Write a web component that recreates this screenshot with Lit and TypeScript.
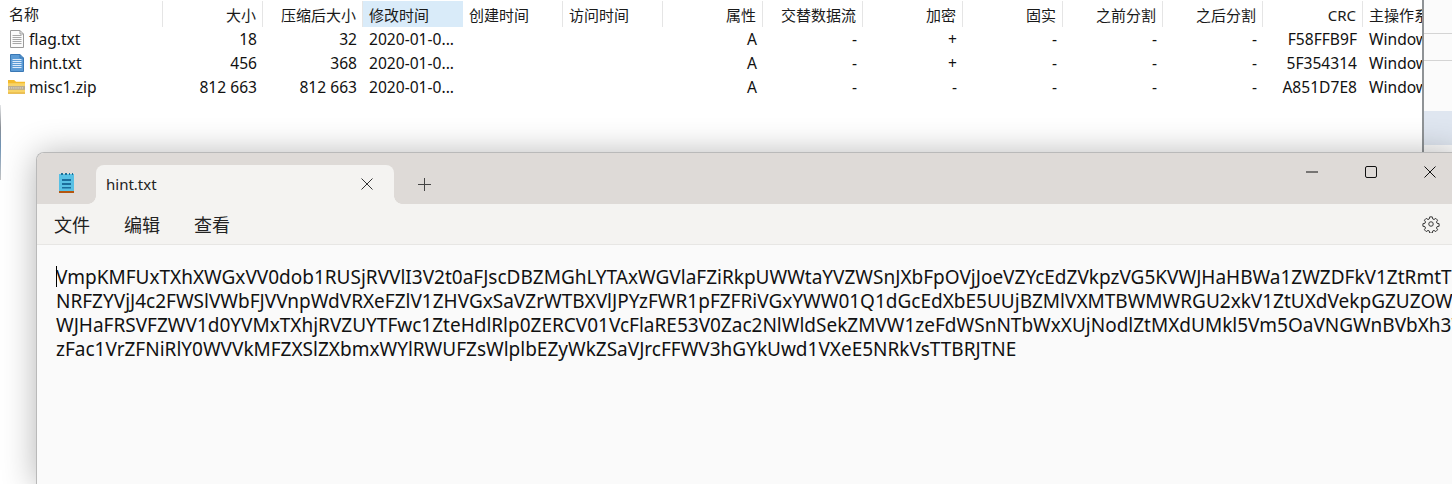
import { LitElement, html, css, svg } from "lit";
import { customElement } from "lit/decorators.js";

const COLS: [string, number, string][] = [
  ["名称", 163, "l"], ["大小", 100, "r"], ["压缩后大小", 100, "r"], ["修改时间", 100, "l"],
  ["创建时间", 100, "l"], ["访问时间", 100, "l"], ["属性", 100, "r"], ["交替数据流", 100, "r"],
  ["加密", 100, "r"], ["固实", 100, "r"], ["之前分割", 100, "r"], ["之后分割", 100, "r"],
  ["CRC", 100, "r"], ["主操作系统", 100, "l"],
];
const ROWS = [
  ["flag.txt", "18", "32", "2020-01-0...", "", "", "A", "-", "+", "-", "-", "-", "F58FFB9F", "Windows"],
  ["hint.txt", "456", "368", "2020-01-0...", "", "", "A", "-", "+", "-", "-", "-", "5F354314", "Windows"],
  ["misc1.zip", "812 663", "812 663", "2020-01-0...", "", "", "A", "-", "-", "-", "-", "-", "A851D7E8", "Windows"],
];
const LINES = [
  "VmpKMFUxTXhXWGxVV0dob1RUSjRVVlI3V2t0aFJscDBZMGhLYTAxWGVlaFZiRkpUWWtaYVZWSnJXbFpOVjJoeVZYcEdZVkpzVG5KVWJHaHBWa1ZWZDFkV1ZtRmtT",
  "NRFZYVjJ4c2FWSlVWbFJVVnpWdVRXeFZlV1ZHVGxSaVZrWTBXVlJPYzFWR1pFZFRiVGxYWW01Q1dGcEdXbE5UUjBZMlVXMTBWMWRGU2xkV1ZtUXdVekpGZUZOW",
  "WJHaFRSVFZWV1d0YVMxTXhjRVZUYTFwc1ZteHdlRlp0ZERCV01VcFlaRE53V0Zac2NlWldSekZMVW1zeFdWSnNTbWxXUjNodlZtMXdUMkl5Vm5OaVNGWnBVbXh3W",
  "zFac1VrZFNiRlY0WVVkMFZXSlZXbmxWYlRWUFZsWlplbEZyWkZSaVJrcFFWV3hGYkUwd1VXeE5NRkVsTTBRJTNE",
];

const lineIcon = (fill: string, stroke: string, bar: string) => svg`
  <svg class="ficon" width="17" height="18" viewBox="-1 0 17 18">
    <path d="M1.5.5H11L14.5 4V17.5H1.5Z" fill="${fill}" stroke="${stroke}"/>
    <path d="M11 .5V4H14.5" fill="none" stroke="${stroke}"/>
    <path d="M3.5 5.5H12.5M3.5 7.5H12.5M3.5 9.5H12.5M3.5 11.5H12.5M3.5 13.5H12.5" stroke="${bar}"/>
  </svg>`;
const zipIcon = svg`
  <svg class="ficon" width="18" height="16" viewBox="0 0 18 16">
    <path d="M0 0.500H6.500L8.500 2.500H18V6H0Z" fill="#f4bb2c"/>
    <path d="M0 4H18V15H0Z" fill="#f8d468"/>
    <path d="M0 7H18V11H0Z" fill="#b8ab90"/>
    <path d="M1 9H17" stroke="#f4f1e8" stroke-dasharray="1 1"/>
    <path d="M0 14.500H18" stroke="#dda329"/>
  </svg>`;
const ICONS = [lineIcon("#fbfbfb", "#9a9a9a", "#a8a8a8"), lineIcon("#5b9bd5", "#3a78b5", "#dceafa"), zipIcon];

@customElement("app-root")
export class AppRoot extends LitElement {
  static styles = css`
    :host { display: block; position: relative; width: 1452px; height: 484px; overflow: hidden; background: #fff;
      font-family: "Noto Sans", "Noto Sans CJK SC", sans-serif; }
    .edge { position: absolute; left: 0; top: 105px; width: 1px; height: 75px; background: linear-gradient(#e4e6e8, #8a8f96 30%, #6f93b5 55%, #c4c4c4 100%); }
    .top { height: 152px; display: flex; }
    .list { width: 1422px; overflow: hidden; flex: none; }
    .aside { flex: 1; border-left: 2px solid #8f9396; background: #fbfbfb; }
    .aside div { height: 26px; border-bottom: 1px solid #d4d4d4; }
    .aside .first { height: 33px; }
    .aside .blue { height: 34px; margin-top: 50px; border: 0; background: #dfe6f0; }
    .head, .row { display: flex; width: 1463px; }
    .head { height: 27px; font-size: 15px; color: #1a1a1a; }
    .hc { box-sizing: border-box; flex: none; margin-top: 1px; height: 26px; line-height: 29px; padding: 0 6px;
      border-right: 1px solid #e5e5e5; white-space: nowrap; overflow: hidden; }
    .hc.sel { background: #d9ebf9; border-right-color: #d9ebf9; }
    .row { height: 24px; font-size: 15.600px; line-height: 24px; color: #111; }
    .c { box-sizing: border-box; flex: none; padding: 0 6px; white-space: nowrap; overflow: hidden; }
    .r { text-align: right; }
    .name { display: flex; align-items: center; gap: 4px; padding-left: 8px; }
    .head .name { padding-left: 9px; }
    .ficon { flex: none; width: 17px; }
    .wrap { height: 332px; }
    .win { height: 332px; width: 1423px; margin-left: 36px; box-sizing: border-box; border: 1px solid #b9b9b9; border-right: 0; border-bottom: 0;
      border-radius: 8px 0 0 0; background: #fafafa; box-shadow: 0 2px 34px rgba(0,0,0,.3); overflow: hidden;
      display: flex; flex-direction: column; position: relative; }
    .tabs { height: 51px; background: #dedad7; display: flex; align-items: flex-end; flex: none; }
    .appicon { width: 59px; height: 51px; display: flex; align-items: center; justify-content: center; flex: none; padding-top: 9px; box-sizing: border-box; }
    .tab { width: 298px; height: 39px; box-sizing: border-box; background: #f4f3f1; border-radius: 8px 8px 0 0; position: relative;
      display: flex; align-items: center; justify-content: space-between; padding: 0 21px 2px 10px; font-size: 15px; color: #222; flex: none; }
    .tab::before, .tab::after { content: ""; position: absolute; bottom: 0; width: 8px; height: 8px; }
    .tab::before { left: -8px; background: radial-gradient(circle at 0 0, transparent 7.500px, #f4f3f1 8px); }
    .tab::after { right: -8px; background: radial-gradient(circle at 100% 0, transparent 7.500px, #f4f3f1 8px); }
    .plus { margin-left: 24px; height: 39px; display: flex; align-items: center; flex: 1; }
    .ctrls { display: flex; align-self: flex-start; }
    .ctrl { width: 59px; height: 37px; display: flex; align-items: center; justify-content: center; }
    .menu { height: 41px; background: #f4f3f1; border-bottom: 1px solid #e7e6e4; display: flex; align-items: center; flex: none;
      padding: 0 19px 0 17px; box-sizing: border-box; font-size: 18px; color: #222; gap: 34px; }
    .menu .gear { margin-left: auto; display: flex; }
    .body { flex: 1; padding: 20px 0 0 19px; font-size: 19px; line-height: 24px; color: #111; white-space: pre; overflow: hidden; position: relative; }
    .line { height: 24px; }
    .caret { position: absolute; left: 19px; top: 21px; width: 1px; height: 21px; background: #000; }
  `;

  render() {
    return html`
      <div class="edge"></div>
      <div class="top">
        <div class="list">
          <div class="head">
            ${COLS.map((c, i) => html`<div class="hc ${c[2] === "r" ? "r" : ""} ${i === 0 ? "name" : ""} ${i === 3 ? "sel" : ""}" style="width:${c[1]}px">${c[0]}</div>`)}
          </div>
          ${ROWS.map((r, ri) => html`<div class="row">
            ${r.map((v, i) => i === 0
              ? html`<div class="c name" style="width:163px">${ICONS[ri]}<span>${v}</span></div>`
              : html`<div class="c ${COLS[i][2] === "r" ? "r" : ""}" style="width:${COLS[i][1]}px">${v}</div>`)}
          </div>`)}
        </div>
        <div class="aside"><div class="first"></div><div></div><div class="blue"></div></div>
      </div>
      <div class="wrap">
        <div class="win">
          <div class="tabs">
            <div class="appicon">
              <svg width="16" height="21" viewBox="0 0 16 21">
                <rect x="0" y="1" width="15" height="17" fill="#58c0e4"/>
                <path d="M2 0h2v2H2zM6 0h2v2H6zM10 0h1v2h-1zM13 0h1v2h-1z" fill="#1f6f96"/>
                <path d="M3 6h9v2H3zM3 10h9v2H3zM3 14h9v1.500H3z" fill="#1b6d9c"/>
                <rect x="0" y="18" width="15" height="2" fill="#b5560f"/>
              </svg>
            </div>
            <div class="tab"><span>hint.txt</span>
              <svg width="12" height="12" viewBox="0 0 12 12"><path d="M.5.5L11.500 11.500M11.500.5L.5 11.500" stroke="#333" fill="none"/></svg>
            </div>
            <div class="plus"><svg width="13" height="13" viewBox="0 0 13 13"><path d="M6.500 0V13M0 6.500H13" stroke="#444" fill="none"/></svg></div>
            <div class="ctrls">
              <div class="ctrl"><svg width="12" height="2" viewBox="0 0 12 2"><path d="M0 1H12" stroke="#111"/></svg></div>
              <div class="ctrl"><svg width="12" height="12" viewBox="0 0 12 12"><rect x=".5" y=".5" width="11" height="11" rx="1.500" fill="none" stroke="#111"/></svg></div>
              <div class="ctrl"><svg width="12" height="12" viewBox="0 0 12 12"><path d="M.5.5L11.500 11.500M11.500.5L.5 11.500" stroke="#111" fill="none"/></svg></div>
            </div>
          </div>
          <div class="menu">
            <span>文件</span><span>编辑</span><span>查看</span>
            <span class="gear"><svg width="18" height="18" viewBox="0 0 24 24" fill="none" stroke="#333" stroke-width="1.300"><circle cx="12" cy="12" r="3"/><path d="M10.300 2.500h3.400l.6 2.800 1.700.7 2.400-1.500 2.400 2.400-1.500 2.400.7 1.700 2.800.6v3.400l-2.800.6-.7 1.700 1.500 2.400-2.400 2.400-2.400-1.500-1.700.7-.6 2.800h-3.400l-.6-2.800-1.700-.7-2.400 1.500-2.400-2.400 1.500-2.400-.7-1.700-2.800-.6v-3.400l2.800-.6.7-1.700-1.500-2.400 2.400-2.400 2.400 1.500 1.700-.7z"/></svg></span>
          </div>
          <div class="body"><div class="caret"></div>${LINES.map((l) => html`<div class="line">${l}</div>`)}</div>
        </div>
      </div>
    `;
  }
}
